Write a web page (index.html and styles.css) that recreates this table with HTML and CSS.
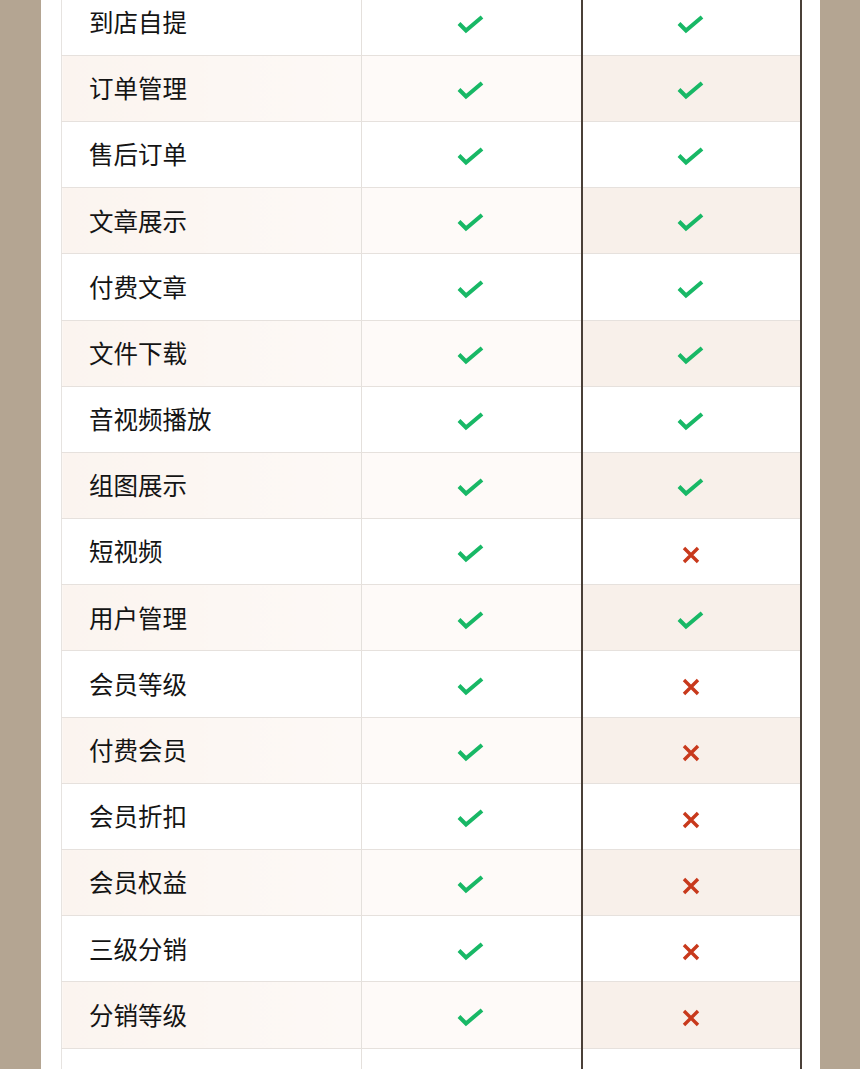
FILE: index.html
```html
<!DOCTYPE html>
<html lang="zh">
<head>
<meta charset="utf-8">
<link rel="stylesheet" href="styles.css">
</head>
<body>
<svg width="0" height="0" class="defs">
  <defs>
    <symbol id="ok" viewBox="0 0 28 20">
      <path d="M2 8.5 L9 15.5 L25 2" fill="none" stroke="#18b866" stroke-width="4" stroke-linecap="butt" stroke-linejoin="miter"/>
    </symbol>
    <symbol id="no" viewBox="0 0 18 18">
      <path d="M2 2 L16 16 M16 2 L2 16" fill="none" stroke="#c8391c" stroke-width="3.4"/>
    </symbol>
  </defs>
</svg>
<div class="panel">
  <table class="cmp">
    <colgroup><col class="c1"><col class="c2"><col class="c3"></colgroup>
    <tbody>
      <tr><td class="name">到店自提</td><td><svg class="ok"><use href="#ok"/></svg></td><td class="pro"><svg class="ok"><use href="#ok"/></svg></td></tr>
      <tr class="alt"><td class="name">订单管理</td><td><svg class="ok"><use href="#ok"/></svg></td><td class="pro"><svg class="ok"><use href="#ok"/></svg></td></tr>
      <tr><td class="name">售后订单</td><td><svg class="ok"><use href="#ok"/></svg></td><td class="pro"><svg class="ok"><use href="#ok"/></svg></td></tr>
      <tr class="alt"><td class="name">文章展示</td><td><svg class="ok"><use href="#ok"/></svg></td><td class="pro"><svg class="ok"><use href="#ok"/></svg></td></tr>
      <tr><td class="name">付费文章</td><td><svg class="ok"><use href="#ok"/></svg></td><td class="pro"><svg class="ok"><use href="#ok"/></svg></td></tr>
      <tr class="alt"><td class="name">文件下载</td><td><svg class="ok"><use href="#ok"/></svg></td><td class="pro"><svg class="ok"><use href="#ok"/></svg></td></tr>
      <tr><td class="name">音视频播放</td><td><svg class="ok"><use href="#ok"/></svg></td><td class="pro"><svg class="ok"><use href="#ok"/></svg></td></tr>
      <tr class="alt"><td class="name">组图展示</td><td><svg class="ok"><use href="#ok"/></svg></td><td class="pro"><svg class="ok"><use href="#ok"/></svg></td></tr>
      <tr><td class="name">短视频</td><td><svg class="ok"><use href="#ok"/></svg></td><td class="pro"><svg class="no"><use href="#no"/></svg></td></tr>
      <tr class="alt"><td class="name">用户管理</td><td><svg class="ok"><use href="#ok"/></svg></td><td class="pro"><svg class="ok"><use href="#ok"/></svg></td></tr>
      <tr><td class="name">会员等级</td><td><svg class="ok"><use href="#ok"/></svg></td><td class="pro"><svg class="no"><use href="#no"/></svg></td></tr>
      <tr class="alt"><td class="name">付费会员</td><td><svg class="ok"><use href="#ok"/></svg></td><td class="pro"><svg class="no"><use href="#no"/></svg></td></tr>
      <tr><td class="name">会员折扣</td><td><svg class="ok"><use href="#ok"/></svg></td><td class="pro"><svg class="no"><use href="#no"/></svg></td></tr>
      <tr class="alt"><td class="name">会员权益</td><td><svg class="ok"><use href="#ok"/></svg></td><td class="pro"><svg class="no"><use href="#no"/></svg></td></tr>
      <tr><td class="name">三级分销</td><td><svg class="ok"><use href="#ok"/></svg></td><td class="pro"><svg class="no"><use href="#no"/></svg></td></tr>
      <tr class="alt"><td class="name">分销等级</td><td><svg class="ok"><use href="#ok"/></svg></td><td class="pro"><svg class="no"><use href="#no"/></svg></td></tr>
      <tr><td class="name"></td><td></td><td class="pro"></td></tr>
    </tbody>
  </table>
</div>
</body>
</html>
```
FILE: styles.css
```css
html, body {
  margin: 0;
  padding: 0;
  height: 1069px;
  overflow: hidden;
  background: #b4a592;
}
.defs {
  position: absolute;
  width: 0;
  height: 0;
}
.panel {
  margin-left: 41px;
  width: 779px;
  height: 1069px;
  background: #ffffff;
  padding: 0 20px;
  box-sizing: border-box;
  overflow: hidden;
}
.cmp {
  margin-top: -10.4px;
  border-collapse: collapse;
  table-layout: fixed;
  width: 739px;
  font-family: "Noto Sans CJK SC", "Noto Sans", sans-serif;
  font-size: 24.5px;
  color: #141414;
}
.c1 { width: 300px; }
.c2 { width: 220px; }
.c3 { width: 219px; }
.cmp td {
  height: 65.2px;
  padding: 0;
  border-bottom: 1px solid #e6e1dd;
  border-left: 1px solid #e4e0dc;
  text-align: center;
  vertical-align: middle;
  line-height: 1;
}
.cmp td.name {
  text-align: left;
  padding-left: 27px;
  border-left: 1px solid #e6e3e0;
}
.cmp td.pro {
  border-left: 2px solid #4a4038;
  border-right: 2px solid #4a4038;
}
.cmp tr.alt td.name {
  background: linear-gradient(to right, #fbf4ef, #fdf9f6);
}
.cmp tr.alt td {
  background: #fefaf8;
}
.cmp tr.alt td.pro {
  background: #f8f0ea;
}
.ok {
  width: 28px;
  height: 20px;
  display: inline-block;
  vertical-align: middle;
}
.no {
  width: 18px;
  height: 18px;
  display: inline-block;
  vertical-align: middle;
}
```
